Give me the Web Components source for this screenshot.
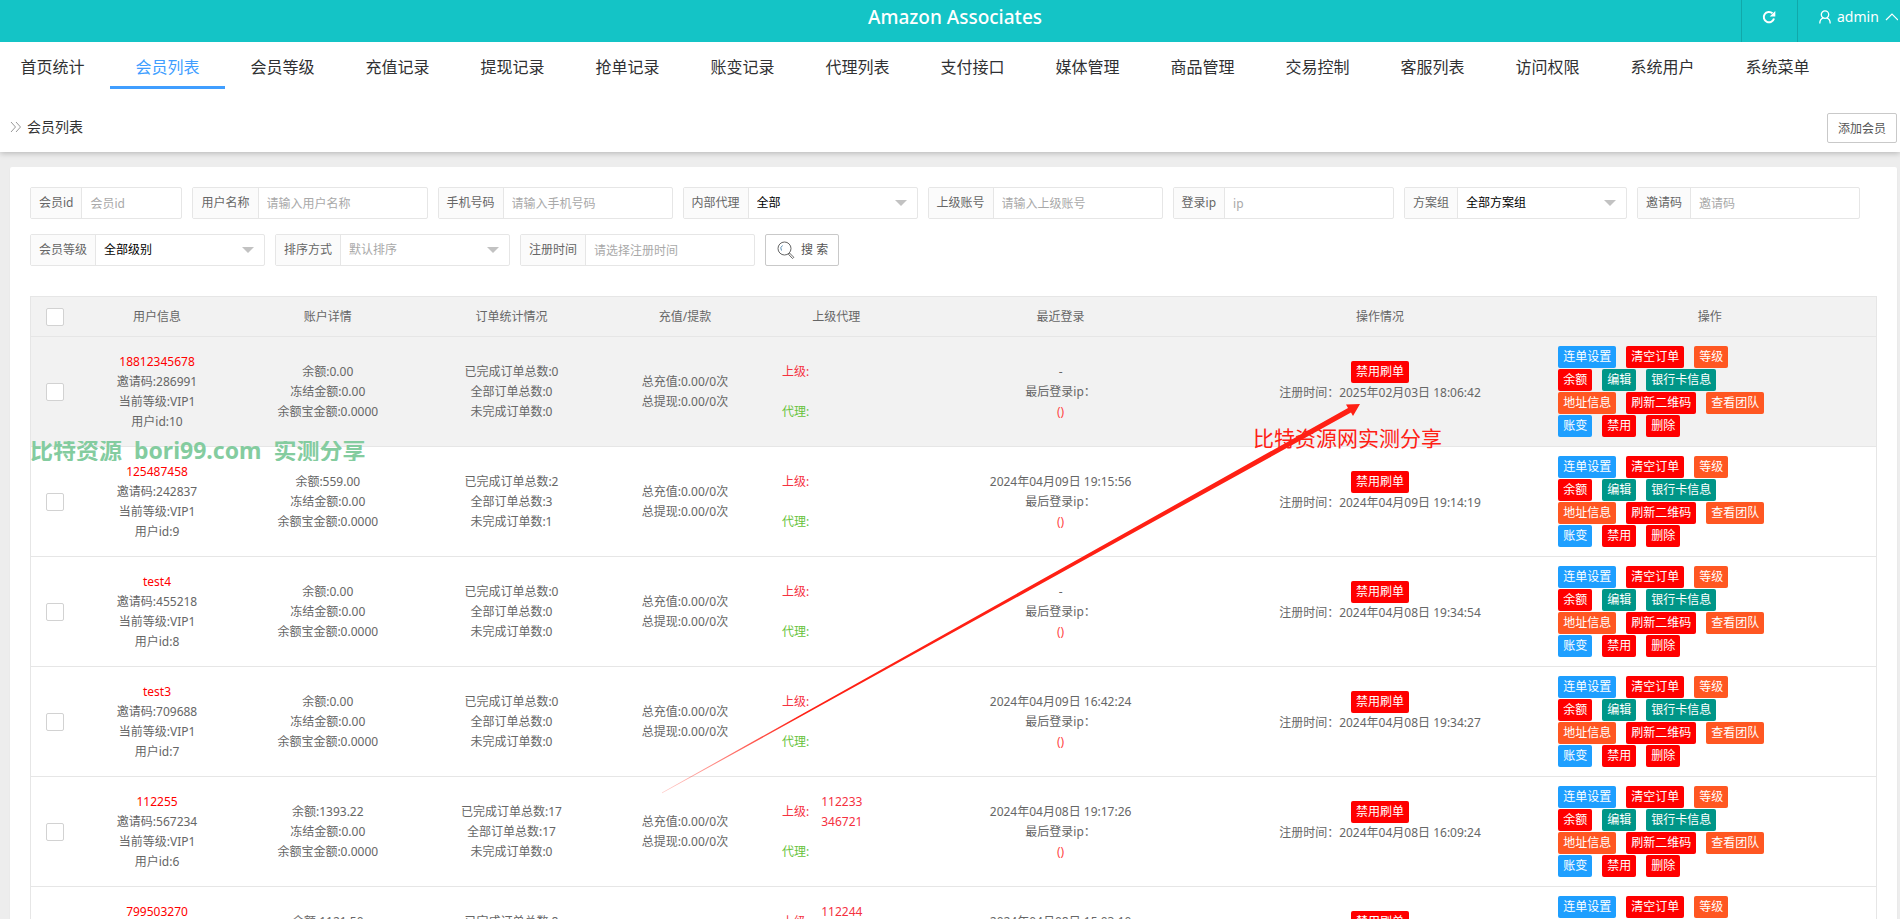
<!DOCTYPE html>
<html lang="zh-CN">
<head>
<meta charset="utf-8">
<title>Amazon Associates</title>
<style>
  html { scrollbar-width: none; }
  body {
    margin: 0;
    background-color: #ededed;
    color: #666666;
    font-family: "Noto Sans", "Noto Sans CJK SC", sans-serif;
    font-size: 12px;
    line-height: 20px;
  }
</style>
</head>
<body>
<member-page></member-page>

<script>
'use strict';

const define = (name, html, setup) => {
  const template = document.createElement('template');
  template.innerHTML = html;
  window.customElements.define(name, class extends HTMLElement {
    constructor() {
      super();
      this._sR = this.attachShadow({ mode: 'open' });
      this._sR.appendChild(template.content.cloneNode(true));
    }
    connectedCallback() {
      if (setup && !this.ready) {
        this.ready = true;
        setup(this, this._sR);
      }
    }
  });
};

define('top-bar', `
  <style>
    :host {
      display: grid;
      grid-template-columns: 1fr auto 1fr;
      height: 42px;
      background-color: #14c4c6;
      color: #ffffff;
      overflow: hidden;
    }
    h1 {
      grid-column: 2;
      margin: 0;
      padding-left: 10px;
      font-size: 19px;
      font-weight: 500;
      line-height: 34px;
    }
    .tools {
      display: flex;
      justify-content: flex-end;
      min-width: 0;
    }
    button {
      display: flex;
      align-items: center;
      gap: 5px;
      flex: none;
      height: 42px;
      padding: 0 0 8px 20px;
      border: 0;
      border-left: 1px solid #11a8aa;
      background: none;
      color: inherit;
      font: inherit;
      font-size: 14px;
    }
    .refresh { width: 56px; }
    .user { width: 103px; }
    svg { flex: none; }
  </style>
  <h1>Amazon Associates</h1>
  <div class="tools">
    <button class="refresh" aria-label="刷新">
      <svg width="14" height="14" viewBox="0 0 14 14" fill="none" stroke="#fff" stroke-width="2">
        <path d="M12 8.500A5.200 5.200 0 1 1 10.500 3.300"/>
        <path d="M13.300 1v5.600H7.700z" fill="#fff" stroke="none"/>
      </svg>
    </button>
    <button class="user">
      <svg width="14" height="14" viewBox="0 0 14 14" fill="none" stroke="#fff" stroke-width="1.3">
        <circle cx="7" cy="4.600" r="3.700"/>
        <path d="M1.800 13.600c0-3 1.400-5 3.400-5.700M12.200 13.600c0-3-1.400-5-3.400-5.700"/>
      </svg>
      <span>admin</span>
      <svg width="14" height="10" viewBox="0 0 14 10" fill="none" stroke="#fff" stroke-width="1.2">
        <path d="M2 8l6-6 6 6"/>
      </svg>
    </button>
  </div>
`);

define('nav-tabs', `
  <style>
    :host {
      display: block;
      position: relative;
      z-index: 1;
      background-color: #ffffff;
      overflow: hidden;
    }
    nav { display: flex; }
    a {
      flex: none;
      box-sizing: border-box;
      width: 115px;
      height: 47px;
      border-bottom: 3px solid transparent;
      color: #303133;
      font-size: 16px;
      line-height: 51px;
      text-align: center;
      text-decoration: none;
    }
    a:first-child {
      width: 110px;
      padding-right: 5px;
    }
    a.active {
      border-color: #409eff;
      color: #409eff;
    }
  </style>
  <nav></nav>
`, (el, root) => {
  const active = el.getAttribute('active');
  root.querySelector('nav').innerHTML = el.getAttribute('items').split(' ')
    .map(t => `<a href="#"${t === active ? ' class="active"' : ''}>${t}</a>`).join('');
});

define('page-title', `
  <style>
    :host {
      display: flex;
      align-items: center;
      height: 30px;
      padding: 24px 3px 9px 10px;
      background-color: #ffffff;
      box-shadow: 0 1px 6px rgba(0, 0, 0, 0.25);
      position: relative;
    }
    h2 {
      flex: 1;
      margin: 0 0 0 5px;
      color: #333333;
      font-size: 14px;
      font-weight: 400;
      line-height: 20px;
      padding-bottom: 2px;
    }
    button {
      height: 30px;
      width: 70px;
      padding: 1px 0 0;
      border: 1px solid #c9c9c9;
      border-radius: 2px;
      background-color: #ffffff;
      color: #555555;
      font: inherit;
    }
  </style>
  <svg width="12" height="12" viewBox="0 0 12 12" fill="none" stroke="#999">
    <path d="M1 0l4.500 5L1 10M6 0l4.500 5L6 10"/>
  </svg>
  <h2><slot></slot></h2>
  <button>添加会员</button>
`);

// Labelled text box or drop-down; type="select" shows the value attribute
define('filter-field', `
  <style>
    :host {
      display: flex;
      box-sizing: border-box;
      height: 32px;
      border: 1px solid #e6e6e6;
      border-radius: 2px;
      background-color: #ffffff;
    }
    label {
      padding: 0 8px;
      border-right: 1px solid #e6e6e6;
      background-color: #fbfbfb;
      line-height: 30px;
      white-space: nowrap;
    }
    .control {
      display: flex;
      align-items: center;
      width: 168px;
      padding-right: 10px;
      box-sizing: border-box;
    }
    :host([short]) .control { width: 99px; }
    input, select {
      flex: 1;
      min-width: 0;
      height: 30px;
      padding: 0 0 0 8px;
      border: 0;
      outline: 0;
      background: none;
      appearance: none;
      color: #000000;
      font: inherit;
    }
    select.empty, input::placeholder { color: #a9a9a9; }
    i {
      border: 6px solid transparent;
      border-top-color: #c2c2c2;
      border-bottom: 0;
    }
  </style>
  <label for="field"></label>
  <div class="control"></div>
`, (el, root) => {
  root.querySelector('label').textContent = el.getAttribute('label');
  const hint = el.getAttribute('hint');
  const value = el.getAttribute('value');
  root.querySelector('.control').innerHTML = el.getAttribute('type') === 'select'
    ? `<select id="field"${value ? '' : ' class="empty"'}><option>${value || hint}</option></select><i></i>`
    : `<input id="field" type="text" placeholder="${hint}">`;
});

define('search-button', `
  <style>
    button {
      display: flex;
      align-items: center;
      gap: 6px;
      height: 32px;
      padding: 0 10px 0 11px;
      border: 1px solid #c9c9c9;
      border-radius: 2px;
      background-color: #ffffff;
      color: #555555;
      font: inherit;
    }
  </style>
  <button>
    <svg width="18" height="18" viewBox="0 0 18 18" fill="none" stroke="#666">
      <circle cx="7.500" cy="7.500" r="6.500"/>
      <path d="M4.500 9.500a3.600 3.600 0 0 1 1-5" stroke="#5b8fb5"/>
      <path d="M12.500 12l4.300 4.300-1.300 1.200-4.100-4.300z"/>
    </svg>
    搜 索
  </button>
`);

define('member-filters', `
  <style>
    :host {
      display: flex;
      flex-wrap: wrap;
      gap: 15px 10px;
    }
  </style>
  <filter-field label="会员id" hint="会员id" short></filter-field>
  <filter-field label="用户名称" hint="请输入用户名称"></filter-field>
  <filter-field label="手机号码" hint="请输入手机号码"></filter-field>
  <filter-field label="内部代理" type="select" value="全部"></filter-field>
  <filter-field label="上级账号" hint="请输入上级账号"></filter-field>
  <filter-field label="登录ip" hint="ip"></filter-field>
  <filter-field label="方案组" type="select" value="全部方案组"></filter-field>
  <filter-field label="邀请码" hint="邀请码"></filter-field>
  <filter-field label="会员等级" type="select" value="全部级别"></filter-field>
  <filter-field label="排序方式" type="select" hint="默认排序"></filter-field>
  <filter-field label="注册时间" hint="请选择注册时间"></filter-field>
  <search-button></search-button>
`);

define('action-button', `
  <style>
    :host { display: inline-flex; }
    button {
      height: 22px;
      padding: 0 5px;
      border: 0;
      border-radius: 2px;
      background-color: #ff0000;
      color: #ffffff;
      font: inherit;
      line-height: 22px;
      white-space: nowrap;
    }
    :host([kind=blue]) button { background-color: #1e9fff; }
    :host([kind=green]) button { background-color: #009688; }
    :host([kind=orange]) button { background-color: #ff5722; }
  </style>
  <button><slot></slot></button>
`);

const members = [
  { name: '18812345678', code: '286991', id: 10, balance: '0.00', orders: [0, 0, 0], parents: [], login: '-', time: '2025年02月03日 18:06:42' },
  { name: '125487458', code: '242837', id: 9, balance: '559.00', orders: [2, 3, 1], parents: [], login: '2024年04月09日 19:15:56', time: '2024年04月09日 19:14:19' },
  { name: 'test4', code: '455218', id: 8, balance: '0.00', orders: [0, 0, 0], parents: [], login: '-', time: '2024年04月08日 19:34:54' },
  { name: 'test3', code: '709688', id: 7, balance: '0.00', orders: [0, 0, 0], parents: [], login: '2024年04月09日 16:42:24', time: '2024年04月08日 19:34:27' },
  { name: '112255', code: '567234', id: 6, balance: '1393.22', orders: [17, 17, 0], parents: ['112233', '346721'], login: '2024年04月08日 19:17:26', time: '2024年04月08日 16:09:24' },
  { name: '799503270', code: '346721', id: 5, balance: '1121.50', orders: [8, 8, 0], parents: ['112244', '346721'], login: '2024年04月08日 15:03:10', time: '2024年04月08日 15:02:24' }
];

const actions = [
  ['连单设置', 'blue'], ['清空订单', 'red'], ['等级', 'orange'],
  ['余额', 'red'], ['编辑', 'green'], ['银行卡信息', 'green'],
  ['地址信息', 'orange'], ['刷新二维码', 'red'], ['查看团队', 'orange'],
  ['账变', 'blue'], ['禁用', 'red'], ['删除', 'red']
];

define('member-table', `
  <style>
    :host { display: block; }
    table {
      width: 100%;
      table-layout: fixed;
      border-collapse: collapse;
      border: 1px solid #e6e6e6;
    }
    col.check { width: 49px; }
    col.user { width: 8.4%; }
    col.account { width: 10.1%; }
    col.order { width: 9.8%; }
    col.money { width: 9%; }
    col.agent { width: 7.4%; }
    col.login { width: 16.9%; }
    col.status { width: 17.7%; }
    th, td {
      padding: 0;
      border-bottom: 1px solid #e6e6e6;
      font-weight: 400;
      text-align: center;
    }
    th { height: 39px; background-color: #f2f2f2; }
    td { height: 109px; }
    tbody tr:first-child { background-color: #f2f2f2; }
    input {
      display: block;
      width: 18px;
      height: 18px;
      margin: 0 auto;
      border: 1px solid #d2d2d2;
      border-radius: 2px;
      background-color: #ffffff;
      appearance: none;
    }
    .name { color: #ff0000; }
    .ip { color: #ff4444; }
    .agents {
      display: grid;
      grid-template-columns: auto 1fr;
      grid-auto-rows: 40px;
      align-items: center;
      gap: 0 12px;
      padding-left: 14px;
      text-align: left;
    }
    .parent { color: #f5313f; }
    .agent { color: #67c23a; }
    .actions {
      display: flex;
      flex-wrap: wrap;
      gap: 1px 10px;
      width: 210px;
      margin-left: 15px;
    }
  </style>
  <table>
    <colgroup>
      <col class="check"><col class="user"><col class="account"><col class="order"><col class="money">
      <col class="agent"><col class="login"><col class="status"><col>
    </colgroup>
    <thead>
      <tr>
        <th><input type="checkbox" aria-label="全选"></th>
        <th>用户信息</th><th>账户详情</th><th>订单统计情况</th><th>充值/提款</th>
        <th>上级代理</th><th>最近登录</th><th>操作情况</th><th>操作</th>
      </tr>
    </thead>
    <tbody></tbody>
  </table>
`, (el, root) => {
  root.querySelector('tbody').innerHTML = members.map(m => `
    <tr>
      <td><input type="checkbox" aria-label="${m.name}"></td>
      <td><span class="name">${m.name}</span><br>邀请码:${m.code}<br>当前等级:VIP1<br>用户id:${m.id}</td>
      <td>余额:${m.balance}<br>冻结金额:0.00<br>余额宝金额:0.0000</td>
      <td>已完成订单总数:${m.orders[0]}<br>全部订单总数:${m.orders[1]}<br>未完成订单数:${m.orders[2]}</td>
      <td>总充值:0.00/0次<br>总提现:0.00/0次</td>
      <td>
        <div class="agents">
          <span class="parent">上级:</span><span class="parent">${m.parents.join('<br>')}</span>
          <span class="agent">代理:</span>
        </div>
      </td>
      <td>${m.login}<br>最后登录ip：<br><span class="ip">()</span></td>
      <td><action-button>禁用刷单</action-button><br>注册时间：${m.time}<br><br></td>
      <td><div class="actions">${actions.map(a => `<action-button kind="${a[1]}">${a[0]}</action-button>`).join('')}</div></td>
    </tr>`).join('');
});

// Notes drawn over the page: watermark, caption and arrow
define('page-marks', `
  <style>
    :host {
      position: absolute;
      inset: 0;
      overflow: hidden;
      pointer-events: none;
    }
    .watermark {
      position: absolute;
      left: 30px;
      top: 441px;
      height: 20px;
      overflow: hidden;
      color: #84cc9f;
      font-size: 23px;
      font-weight: 700;
      line-height: 18px;
      white-space: pre;
    }
    .caption {
      position: absolute;
      left: 1253px;
      top: 423px;
      color: #ff2014;
      font-size: 21px;
      line-height: 30px;
      white-space: nowrap;
    }
    svg {
      position: absolute;
      left: 0;
      top: 0;
    }
  </style>
  <div class="watermark">比特资源  bori99.com  实测分享</div>
  <div class="caption">比特资源网实测分享</div>
  <svg width="1400" height="800" viewBox="0 0 1400 800">
    <defs>
      <linearGradient id="fade" gradientUnits="userSpaceOnUse" x1="656" y1="796" x2="800" y2="716">
        <stop offset="0" stop-color="#ff2014" stop-opacity="0.2"/>
        <stop offset="1" stop-color="#ff2014"/>
      </linearGradient>
    </defs>
    <path fill="url(#fade)" d="M662 792.500L1348 408L1346 404.500L1360 404L1353 416L1351 412.500L662 793.300Z"/>
  </svg>
`);

define('member-page', `
  <style>
    :host {
      display: block;
      position: relative;
      overflow: hidden;
    }
    main {
      margin: 15px 3px 15px 10px;
      padding: 20px;
      border-radius: 2px;
      background-color: #ffffff;
      box-shadow: 0 1px 2px rgba(0, 0, 0, 0.05);
    }
    member-table { margin-top: 30px; }
  </style>
  <top-bar></top-bar>
  <nav-tabs active="会员列表" items="首页统计 会员列表 会员等级 充值记录 提现记录 抢单记录 账变记录 代理列表 支付接口 媒体管理 商品管理 交易控制 客服列表 访问权限 系统用户 系统菜单"></nav-tabs>
  <page-title>会员列表</page-title>
  <main>
    <member-filters></member-filters>
    <member-table></member-table>
  </main>
  <page-marks></page-marks>
`);
</script>
</body>
</html>
